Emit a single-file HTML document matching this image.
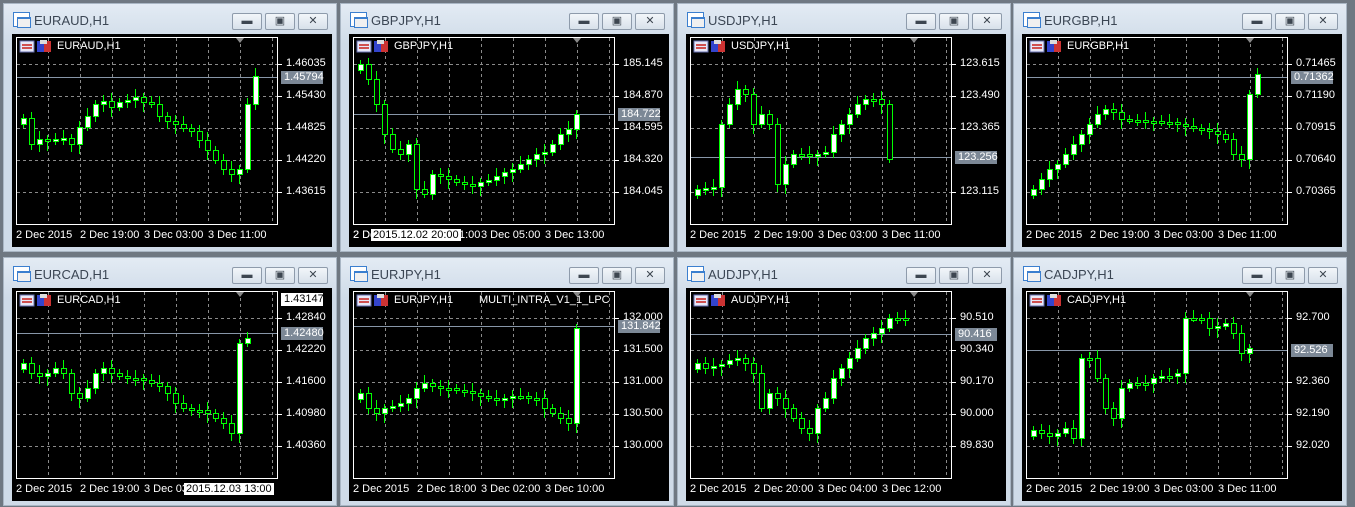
<!DOCTYPE html>
<html><head><meta charset="utf-8"><style>
*{margin:0;padding:0;box-sizing:border-box}
body{width:1355px;height:507px;background:#6f7882;position:relative;overflow:hidden;font-family:"Liberation Sans",sans-serif}
.w{position:absolute;width:334px;height:249px;background:linear-gradient(#e3ebf4,#cfdbe8 40px,#cfdbe8);border:1px solid #a9b6c4}
.tt{position:absolute;left:30px;top:9px;font-size:13px;color:#3b4654}
.ic{position:absolute;left:9px;top:8px;width:17px;height:15px;border:1px solid #3b7fcf;background:#fff}
.ic:after{content:"";position:absolute;left:3px;top:4px;width:12px;height:8px;background:#f0f0f0;border:1px solid #3b7fcf;border-top:2px solid #3b7fcf}
.b{position:absolute;top:9px;width:30px;height:17px;border:1px solid #8e9bab;border-radius:2px;background:linear-gradient(#f2f6fa,#d8e1ea);color:#3d4650;font-size:11px;text-align:center;line-height:15px}
.ch{position:absolute;left:8px;top:30px;width:320px;height:213px;background:#000}
.ch svg{position:absolute;left:0;top:0}
.t{position:absolute;color:#fff;font-size:11px;white-space:nowrap}
.p{position:absolute;left:271px;color:#fff;font-size:11px}
.cp{position:absolute;left:269px;color:#fff;font-size:11px;background:#7c8896;padding:0 3px;width:42px;height:13px;line-height:13px}
.wp{background:#fff;color:#000}
</style></head><body>
<div id="root"></div>
<script>
const W=[
{n:"EURAUD,H1",x:3,y:3,p:[["1.46035",60],["1.45430",92],["1.44825",124],["1.44220",156],["1.43615",188]],cp:["1.45794",73],tl:["2 Dec 2015","2 Dec 19:00","3 Dec 03:00","3 Dec 11:00"],
c:[114,140,135,137,135,134,140,123,112,100,97,103,98,96,93,98,100,112,117,120,124,127,136,146,156,165,170,165,100,72]},
{n:"GBPJPY,H1",x:340,y:3,p:[["185.145",60],["184.870",92],["184.595",124],["184.320",156],["184.045",188]],cp:["184.722",110],tl:["2 Dec 2015","","3 Dec 05:00","3 Dec 13:00"],
c:[60,75,100,130,145,150,140,185,190,170,172,175,178,180,182,178,176,172,168,165,160,155,150,148,140,130,125,110]},
{n:"USDJPY,H1",x:677,y:3,p:[["123.615",60],["123.490",92],["123.365",124],["123.115",188]],cp:["123.256",153],tl:["2 Dec 2015","2 Dec 19:00","3 Dec 03:00","3 Dec 11:00"],
c:[185,184,183,120,100,85,90,120,110,120,180,160,150,150,152,150,148,130,120,110,100,95,95,100,155]},
{n:"EURGBP,H1",x:1013,y:3,p:[["0.71465",60],["0.71190",92],["0.70915",124],["0.70640",156],["0.70365",188]],cp:["0.71362",73],tl:["2 Dec 2015","2 Dec 19:00","3 Dec 03:00","3 Dec 11:00"],
c:[185,175,165,160,150,140,130,120,110,105,108,115,116,116,117,117,118,118,120,122,124,125,127,130,135,150,155,90,70]},
{n:"EURCAD,H1",x:3,y:257,p:[["1.42840",60],["1.42220",92],["1.41600",124],["1.40980",156],["1.40360",188]],cp:["1.42480",75],wp:["1.43147",41],tl:["2 Dec 2015","2 Dec 19:00","3 Dec 03","3 Dec 11:00"],
c:[105,115,118,115,110,115,135,140,130,115,110,115,118,120,120,122,125,128,135,145,150,152,152,155,160,165,175,85,80]},
{n:"EURJPY,H1",x:340,y:257,p:[["132.000",60],["131.500",92],["131.000",124],["130.500",156],["130.000",188]],cp:["131.842",68],tl:["2 Dec 2015","2 Dec 18:00","3 Dec 02:00","3 Dec 10:00"],
c:[135,150,155,150,148,145,140,130,125,128,130,130,132,133,135,138,140,142,140,138,138,140,140,150,155,160,165,70]},
{n:"AUDJPY,H1",x:677,y:257,p:[["90.510",60],["90.340",92],["90.170",124],["90.000",156],["89.830",188]],cp:["90.416",76],tl:["2 Dec 2015","2 Dec 20:00","3 Dec 04:00","3 Dec 12:00"],
c:[105,110,108,106,102,100,105,115,150,135,140,150,160,170,175,150,140,120,110,100,90,80,75,70,60,60,60]},
{n:"CADJPY,H1",x:1013,y:257,p:[["92.700",60],["92.360",124],["92.190",156],["92.020",188]],cp:["92.526",92],tl:["2 Dec 2015","2 Dec 19:00","3 Dec 03:00","3 Dec 11:00"],
c:[172,175,178,175,170,180,100,100,120,150,160,130,125,125,125,120,118,118,115,60,60,60,70,68,65,75,95,90]}
];
let h="";
W.forEach((w,k)=>{
 const ty=y=>y-30;
 let s=`<svg width="320" height="213">`;
 s+=`<rect x="4.5" y="3.5" width="261" height="187" fill="none" stroke="#fff"/>`;
 for(let gx=36;gx<265;gx+=32)s+=`<line x1="${gx+.5}" y1="4" x2="${gx+.5}" y2="190" stroke="#8a8a8a" stroke-dasharray="3,3"/>`;
 w.p.forEach(p=>{const yy=ty(p[1]);s+=`<line x1="5" y1="${yy+.5}" x2="265" y2="${yy+.5}" stroke="#8a8a8a" stroke-dasharray="3,3"/><line x1="265" y1="${yy+.5}" x2="270" y2="${yy+.5}" stroke="#fff"/>`;});
 const cy=ty(w.cp[1]);s+=`<line x1="5" y1="${cy+.5}" x2="265" y2="${cy+.5}" stroke="#8796a8"/>`;
 s+=`<path d="M224 4h8l-4 5z" fill="#888"/>`;
 let prev=w.c[0]+6;
 w.c.forEach((c,i)=>{const x=8+i*8;const o=ty(prev),cl=ty(c);const t=Math.min(o,cl),b=Math.max(o,cl);
  const hi=t-4-(i%3)*2,lo=b+4+(i%4)*2;
  s+=`<line x1="${x+3.5}" y1="${hi}" x2="${x+3.5}" y2="${lo}" stroke="#0f0"/>`;
  s+=`<rect x="${x+1.5}" y="${t+.5}" width="5" height="${Math.max(b-t,2)}" fill="${cl<o?'#fff':'#000'}" stroke="#0f0"/>`;
  prev=c;});
 s+=`<rect x="8" y="7" width="14" height="11" fill="#e8e8f8" stroke="#6670b0"/><rect x="10" y="10" width="10" height="2" fill="#d05050"/><rect x="10" y="13" width="10" height="2" fill="#d05050"/>`;
 s+=`<rect x="25" y="7" width="7" height="11" fill="#3344cc"/><rect x="32" y="7" width="7" height="11" fill="#cc3333"/><rect x="28" y="6" width="7" height="4" fill="#ddd"/>`;
 s+=`</svg>`;
 let txt=`<div class="t" style="left:45px;top:6px">${w.n}</div>`;
 w.p.forEach(p=>{txt+=`<div class="p" style="left:274px;top:${ty(p[1])-7}px">${p[0]}</div>`});
 txt+=`<div class="cp" style="top:${cy-6}px">${w.cp[0]}</div>`;
 if(w.wp)txt+=`<div class="cp wp" style="top:${ty(w.wp[1])-6}px">${w.wp[0]}</div>`;
 [4,68,132,196].forEach((tx,j)=>{if(w.tl[j])txt+=`<div class="t" style="left:${tx}px;top:195px">${w.tl[j]}</div>`});
 if(k==1)txt+=`<div class="t" style="left:4px;top:195px">2 Dec</div><div class="t" style="left:22px;top:195px;background:#fff;color:#000;padding:0 2px">2015.12.02 20:00</div><div class="t" style="left:110px;top:195px">1:00</div>`;
 if(k==4)txt+=`<div class="t" style="left:172px;top:195px;background:#fff;color:#000;padding:0 2px">2015.12.03 13:00</div>`;
 if(k==5)txt+=`<div class="t" style="left:130px;top:6px">MULTI_INTRA_V1_1_LPC</div>`;
 h+=`<div class="w" style="left:${w.x}px;top:${w.y}px"><div class="ic"></div><div class="tt">${w.n}</div>
 <div class="b" style="left:228px">&#9644;</div><div class="b" style="left:261px">&#9635;</div><div class="b" style="left:294px">&#10005;</div>
 <div class="ch">${s}${txt}</div></div>`;
});
document.getElementById("root").innerHTML=h;
</script>
</body></html>
